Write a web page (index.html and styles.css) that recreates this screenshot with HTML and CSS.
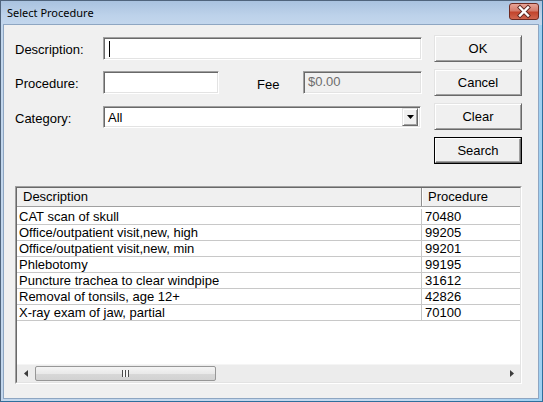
FILE: index.html
```html
<!DOCTYPE html>
<html>
<head lang="en">
  <meta charset="UTF-8">
  <title>Select Procedure</title>
  <link rel="stylesheet" href="styles.css">
</head>
<body>
<div class="window">
  <div class="titlebar">
    <span class="title">Select Procedure</span>
    <a class="close-btn" href="javascript:void(0);">
      <svg width="30" height="17" viewBox="0 0 30 17">
        <path d="M11 4.5 L19 12.5 M19 4.5 L11 12.5" stroke="#5e2a24" stroke-width="4.2" stroke-linecap="square"/>
        <path d="M11 4.5 L19 12.5 M19 4.5 L11 12.5" stroke="#ffffff" stroke-width="2.4" stroke-linecap="square"/>
      </svg>
    </a>
  </div>

  <div class="client">
    <div class="top">
      <div class="fields">
        <div class="field-row">
          <label class="field-label">Description:</label>
          <div class="textbox desc-input"><span class="caret"></span></div>
        </div>
        <div class="field-row row-procedure">
          <label class="field-label">Procedure:</label>
          <div class="textbox proc-input"></div>
          <label class="fee-label">Fee</label>
          <div class="textbox fee-input">$0.00</div>
        </div>
        <div class="field-row row-category">
          <label class="field-label">Category:</label>
          <div class="combo">
            <span class="combo-text">All</span>
            <span class="combo-btn">
              <svg width="7" height="4" viewBox="0 0 7 4"><path d="M0 0 H7 L3.5 4 Z" fill="#000"/></svg>
            </span>
          </div>
        </div>
      </div>

      <div class="buttons">
        <a class="btn" href="javascript:void(0);">OK</a>
        <a class="btn" href="javascript:void(0);">Cancel</a>
        <a class="btn" href="javascript:void(0);">Clear</a>
        <a class="btn btn-default" href="javascript:void(0);"><span>Search</span></a>
      </div>
    </div>

    <div class="grid">
      <div class="grid-inner">
        <div class="grid-head">
          <div class="head-desc">Description</div>
          <div class="head-proc">Procedure</div>
        </div>
        <div class="grid-body">
          <div class="grid-row"><div class="cell-desc">CAT scan of skull</div><div class="cell-proc">70480</div></div>
          <div class="grid-row"><div class="cell-desc">Office/outpatient visit,new, high</div><div class="cell-proc">99205</div></div>
          <div class="grid-row"><div class="cell-desc">Office/outpatient visit,new, min</div><div class="cell-proc">99201</div></div>
          <div class="grid-row"><div class="cell-desc">Phlebotomy</div><div class="cell-proc">99195</div></div>
          <div class="grid-row"><div class="cell-desc">Puncture trachea to clear windpipe</div><div class="cell-proc">31612</div></div>
          <div class="grid-row"><div class="cell-desc">Removal of tonsils, age 12+</div><div class="cell-proc">42826</div></div>
          <div class="grid-row"><div class="cell-desc">X-ray exam of jaw, partial</div><div class="cell-proc">70100</div></div>
        </div>
        <div class="hscroll">
          <span class="scroll-arrow">
            <svg width="4" height="7" viewBox="0 0 4 7"><path d="M4 0 V7 L0 3.5 Z" fill="#3c3c3c"/></svg>
          </span>
          <span class="scroll-track">
            <span class="scroll-thumb"><span class="grip"></span></span>
          </span>
          <span class="scroll-arrow">
            <svg width="4" height="7" viewBox="0 0 4 7"><path d="M0 0 V7 L4 3.5 Z" fill="#3c3c3c"/></svg>
          </span>
        </div>
      </div>
    </div>
  </div>
</div>
</body>
</html>
```

FILE: styles.css
```css
body {
  margin: 0px;
  padding: 0px;
}

a {
  text-decoration: none;
  color: #000000;
}

.window {
  width: 543px;
  height: 402px;
  box-sizing: border-box;
  border: 1px solid #50647c;
  border-right-color: #2f6f9c;
  border-bottom-color: #2f6f9c;
  padding: 0px 4px 3px 3px;
  background: linear-gradient(to right, #c2d6ec 0%, #c4d9ef 80%, #9fd0f2 100%);
  display: flex;
  flex-direction: column;
  font-family: "Liberation Sans", Arial, sans-serif;
  font-size: 13px;
}

.titlebar {
  height: 24px;
  margin: 0px -4px 0px -3px;
  padding: 0px 4px 0px 6px;
  background: linear-gradient(#a9c2df, #bdd2ea 60%, #c3d7ed);
  display: flex;
  align-items: center;
  justify-content: space-between;
}

.title {
  font-family: "Noto Sans", "Open Sans", sans-serif;
  font-size: 11px;
  color: #000000;
  padding-bottom: 1px;
}

.close-btn {
  width: 30px;
  height: 17px;
  margin-top: -3px;
  margin-right: -1px;
  box-sizing: border-box;
  border: 1px solid #6e2a21;
  border-radius: 3px;
  background: linear-gradient(#e8a497, #d47c6c 45%, #c2442c 55%, #d0664f);
  display: flex;
  align-items: center;
  justify-content: center;
  overflow: hidden;
}

.close-btn svg {
  display: block;
  margin: -1px;
}

.client {
  flex: 1;
  background: #f0f0f0;
  box-shadow: 0px 0px 0px 1px #8ea6c2;
  padding: 10px 16px 14px 11px;
  display: flex;
  flex-direction: column;
}

.top {
  display: flex;
  justify-content: space-between;
}

.fields {
  padding-top: 2px;
}

.field-row {
  display: flex;
  align-items: center;
  height: 23px;
}

.row-procedure {
  margin-top: 11px;
}

.row-category {
  margin-top: 12px;
  height: 22px;
}

.field-label {
  width: 88px;
  padding-top: 2px;
}

.textbox {
  height: 23px;
  box-sizing: border-box;
  background: #ffffff;
  border: 1px solid;
  border-color: #a0a0a0 #ffffff #ffffff #a0a0a0;
  box-shadow: inset 1px 1px 0px #696969, inset -1px -1px 0px #e3e3e3;
  display: flex;
  align-items: center;
  padding-left: 4px;
}

.desc-input {
  width: 319px;
}

.caret {
  width: 1px;
  height: 16px;
  margin-left: 1px;
  background: #000000;
}

.proc-input {
  width: 116px;
}

.fee-label {
  margin-left: 38px;
  width: 46px;
  padding-top: 4px;
}

.fee-input {
  width: 119px;
  background: #f0f0f0;
  color: #6d6d6d;
  padding-bottom: 3px;
}

.combo {
  width: 318px;
  height: 22px;
  box-sizing: border-box;
  background: #ffffff;
  border: 1px solid;
  border-color: #a0a0a0 #ffffff #ffffff #a0a0a0;
  box-shadow: inset 1px 1px 0px #696969, inset -1px -1px 0px #e3e3e3;
  display: flex;
  align-items: center;
  justify-content: space-between;
  padding: 2px 2px 2px 4px;
}

.combo-btn {
  width: 16px;
  height: 18px;
  box-sizing: border-box;
  background: #f0f0f0;
  border: 1px solid;
  border-color: #e3e3e3 #696969 #696969 #e3e3e3;
  box-shadow: inset 1px 1px 0px #ffffff, inset -1px -1px 0px #a0a0a0;
  display: flex;
  align-items: center;
  justify-content: center;
}

.combo-btn svg {
  display: block;
}

.buttons {
  display: flex;
  flex-direction: column;
  gap: 7px;
}

.btn {
  width: 88px;
  height: 27px;
  box-sizing: border-box;
  background: #f0f0f0;
  border: 1px solid;
  border-color: #e3e3e3 #696969 #696969 #e3e3e3;
  box-shadow: inset 1px 1px 0px #ffffff, inset -1px -1px 0px #a0a0a0;
  display: flex;
  align-items: center;
  justify-content: center;
  padding-bottom: 1px;
}

.btn-default {
  border: 1px solid #000000;
  box-shadow: none;
  padding: 0px;
}

.btn-default span {
  width: 100%;
  height: 100%;
  box-sizing: border-box;
  border: 1px solid;
  border-color: #ffffff #696969 #696969 #ffffff;
  box-shadow: inset -1px -1px 0px #a0a0a0;
  display: flex;
  align-items: center;
  justify-content: center;
  padding-bottom: 1px;
}

.grid {
  margin-top: 22px;
  width: 507px;
  height: 198px;
  box-sizing: border-box;
  border: 1px solid;
  border-color: #a0a0a0 #ffffff #ffffff #a0a0a0;
}

.grid-inner {
  height: 100%;
  box-sizing: border-box;
  border: 1px solid;
  border-color: #696969 #e3e3e3 #e3e3e3 #696969;
  background: #ffffff;
  display: flex;
  flex-direction: column;
}

.grid-head {
  height: 18px;
  background: #f0f0f0;
  border-bottom: 1px solid #a0a0a0;
  display: flex;
  align-items: center;
}

.head-desc {
  width: 398px;
  padding-left: 6px;
  height: 100%;
  line-height: 18px;
  border-right: 1px solid #8e8e8e;
}

.head-proc {
  flex: 1;
  height: 100%;
  line-height: 18px;
  padding-left: 5px;
  border-left: 1px solid #ffffff;
}

.grid-body {
  flex: 1;
  padding-top: 2px;
}

.grid-row {
  height: 15px;
  border-bottom: 1px solid #c8c8c8;
  display: flex;
  line-height: 15px;
}

.cell-desc {
  width: 402px;
  padding-left: 2px;
  border-right: 1px solid #c8c8c8;
  white-space: nowrap;
}

.cell-proc {
  flex: 1;
  padding-left: 3px;
}

.hscroll {
  height: 17px;
  display: flex;
  background: #ececec;
  border-top: 1px solid #f5f5f5;
}

.scroll-arrow {
  width: 17px;
  display: flex;
  align-items: center;
  justify-content: center;
}

.scroll-arrow svg {
  display: block;
}

.scroll-track {
  flex: 1;
  display: flex;
  align-items: center;
}

.scroll-thumb {
  width: 181px;
  height: 15px;
  margin-left: 1px;
  box-sizing: border-box;
  border: 1px solid #979797;
  border-radius: 2px;
  background: linear-gradient(#f4f4f4, #e9e9e9 50%, #d8d8d8 51%, #d2d2d2);
  display: flex;
  align-items: center;
  justify-content: center;
}

.grip {
  width: 7px;
  height: 7px;
  background: repeating-linear-gradient(to right, #4a4a4a 0px, #4a4a4a 1px, #f6f6f6 1px, #f6f6f6 3px);
}
```
